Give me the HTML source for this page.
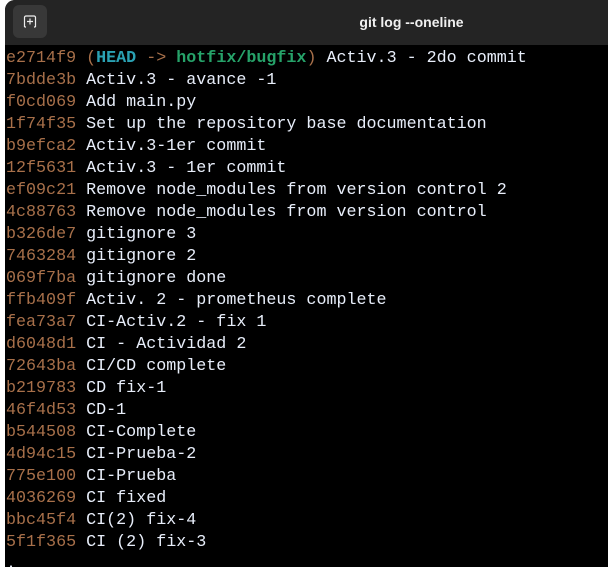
<!DOCTYPE html>
<html><head><style>
body{margin:0;background:#fff;width:608px;height:567px;overflow:hidden;position:relative}
.win{position:absolute;left:5px;top:0;width:603px;height:567px;background:#000;border-top-left-radius:10px;overflow:hidden}
.hdr{height:45px;background:#242424;position:relative}
.btn{position:absolute;left:8px;top:5px;width:34px;height:33px;background:#383838;border-radius:6px}
.ttl{position:absolute;left:0;right:0;top:14px;padding-left:210px;text-align:center;color:#f0f0f0;font:bold 14px "Liberation Sans",sans-serif;box-sizing:border-box}
pre{margin:0;padding:3px 0 0 1px;font:16.7px/22px "Liberation Mono",monospace;color:#e8eefa}
.h{color:#a8704a}.c{color:#2aa1b3;font-weight:bold}.g{color:#26a269;font-weight:bold}
</style></head><body><div class="win"><div class="hdr"><div class="btn"><svg width="34" height="33"><path d="M11.5 22V12.5a1.5 1.5 0 0 1 1.5-1.5h8a1.5 1.5 0 0 1 1.5 1.5V22M13 22h-1.5M21 22h1.5M17 13.5v6M14 16.5h6" stroke="#eee" stroke-width="1.2" fill="none"/></svg></div><div class="ttl">git log --oneline</div></div>
<pre><span class="h">e2714f9 (</span><span class="c">HEAD</span><span class="h"> -&gt; </span><span class="g">hotfix/bugfix</span><span class="h">)</span> Activ.3 - 2do commit
<span class="h">7bdde3b</span> Activ.3 - avance -1
<span class="h">f0cd069</span> Add main.py
<span class="h">1f74f35</span> Set up the repository base documentation
<span class="h">b9efca2</span> Activ.3-1er commit
<span class="h">12f5631</span> Activ.3 - 1er commit
<span class="h">ef09c21</span> Remove node_modules from version control 2
<span class="h">4c88763</span> Remove node_modules from version control
<span class="h">b326de7</span> gitignore 3
<span class="h">7463284</span> gitignore 2
<span class="h">069f7ba</span> gitignore done
<span class="h">ffb409f</span> Activ. 2 - prometheus complete
<span class="h">fea73a7</span> CI-Activ.2 - fix 1
<span class="h">d6048d1</span> CI - Actividad 2
<span class="h">72643ba</span> CI/CD complete
<span class="h">b219783</span> CD fix-1
<span class="h">46f4d53</span> CD-1
<span class="h">b544508</span> CI-Complete
<span class="h">4d94c15</span> CI-Prueba-2
<span class="h">775e100</span> CI-Prueba
<span class="h">4036269</span> CI fixed
<span class="h">bbc45f4</span> CI(2) fix-4
<span class="h">5f1f365</span> CI (2) fix-3
.</pre></div></body></html>
